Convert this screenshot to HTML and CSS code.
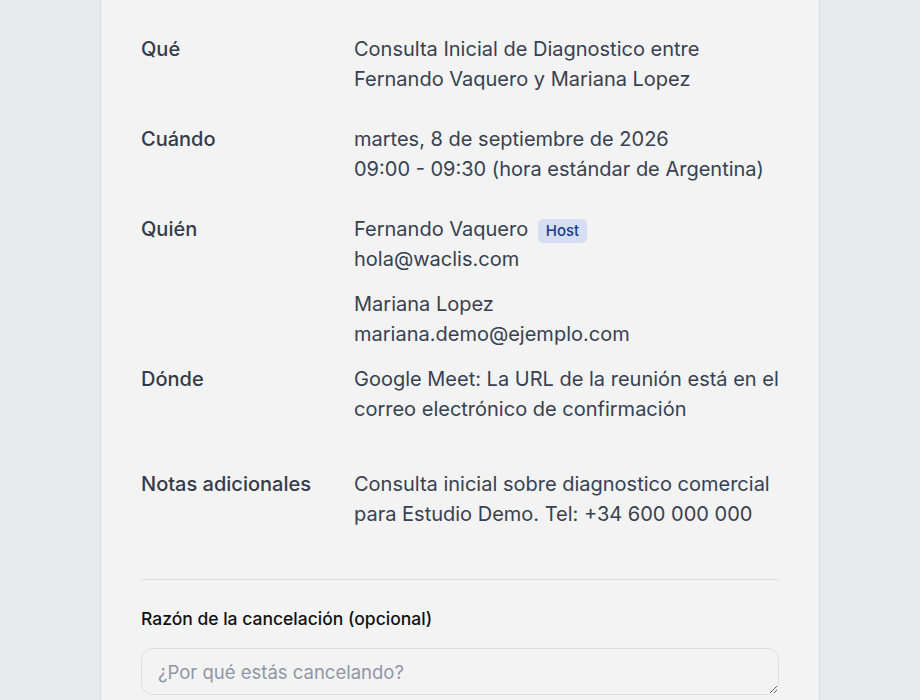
FILE: index.html
```html
<!DOCTYPE html>
<html lang="es">
<head>
    <meta charset="UTF-8">
    <meta name="viewport" content="width=device-width, initial-scale=1.0">
    <title>Cancelar reserva</title>
    <link rel="stylesheet" href="styles.css">
</head>
<body>
    <div class="card">
        <div class="row">
            <div class="label">Qué</div>
            <div class="value">Consulta Inicial de Diagnostico entre Fernando Vaquero y Mariana Lopez</div>
        </div>
        <div class="row">
            <div class="label">Cuándo</div>
            <div class="value">
                martes, 8 de septiembre de 2026<br>
                09:00 - 09:30 (hora estándar de Argentina)
            </div>
        </div>
        <div class="row row-who">
            <div class="label">Quién</div>
            <div class="value">
                <div class="person">
                    <div>Fernando Vaquero <span class="badge">Host</span></div>
                    <div>hola@waclis.com</div>
                </div>
                <div class="person">
                    <div>Mariana Lopez</div>
                    <div>mariana.demo@ejemplo.com</div>
                </div>
            </div>
        </div>
        <div class="row row-where">
            <div class="label">Dónde</div>
            <div class="value">Google Meet: La URL de la reunión está en el correo electrónico de confirmación</div>
        </div>
        <div class="row">
            <div class="label">Notas adicionales</div>
            <div class="value">Consulta inicial sobre diagnostico comercial para Estudio Demo. Tel: +34 600 000 000</div>
        </div>

        <hr class="divider">

        <label class="field-label" for="reason">Razón de la cancelación (opcional)</label>
        <textarea id="reason" class="field" placeholder="¿Por qué estás cancelando?"></textarea>
    </div>
</body>
</html>
```

FILE: styles.css
```css
body {
    margin: 0;
    padding: 0;
    background-color: #e9eaec;
    font-family: Inter, "Noto Sans", sans-serif;
    color: #374151;
}
.card {
    width: 638px;
    margin: 0 auto;
    padding: 34px 40px 40px;
    background-color: #f3f3f3;
    border-left: 1px solid #dadbdd;
    border-right: 1px solid #dadbdd;
}
.row {
    display: grid;
    grid-template-columns: 213px 1fr;
    font-size: 20px;
    line-height: 30px;
    margin-bottom: 30px;
}
.label {
    font-weight: 500;
    color: #333b4a;
}
.value {
    color: #374151;
}
.row-who {
    margin-bottom: 0;
}
.person {
    margin-bottom: 15px;
}
.row-where {
    margin-bottom: 45px;
}
.badge {
    display: inline-block;
    margin-left: 4px;
    padding: 0 8px;
    line-height: 24px;
    font-size: 15px;
    font-weight: 500;
    color: #1e3a8a;
    background-color: #d6def2;
    border-radius: 5px;
    vertical-align: 0;
}
.divider {
    border: 0;
    border-top: 1px solid #dcdcdc;
    margin: 50px 0 28px;
}
.field-label {
    display: block;
    font-size: 17.5px;
    font-weight: 500;
    color: #111;
    margin-bottom: 19px;
}
.field {
    display: block;
    box-sizing: border-box;
    width: 100%;
    height: 47px;
    padding: 12px 16px;
    font-family: inherit;
    font-size: 18.5px;
    background-color: #f3f3f3;
    border: 1px solid #dddddd;
    border-radius: 12px;
    color: #374151;
}
.field::placeholder {
    color: #8f97a6;
}
```
